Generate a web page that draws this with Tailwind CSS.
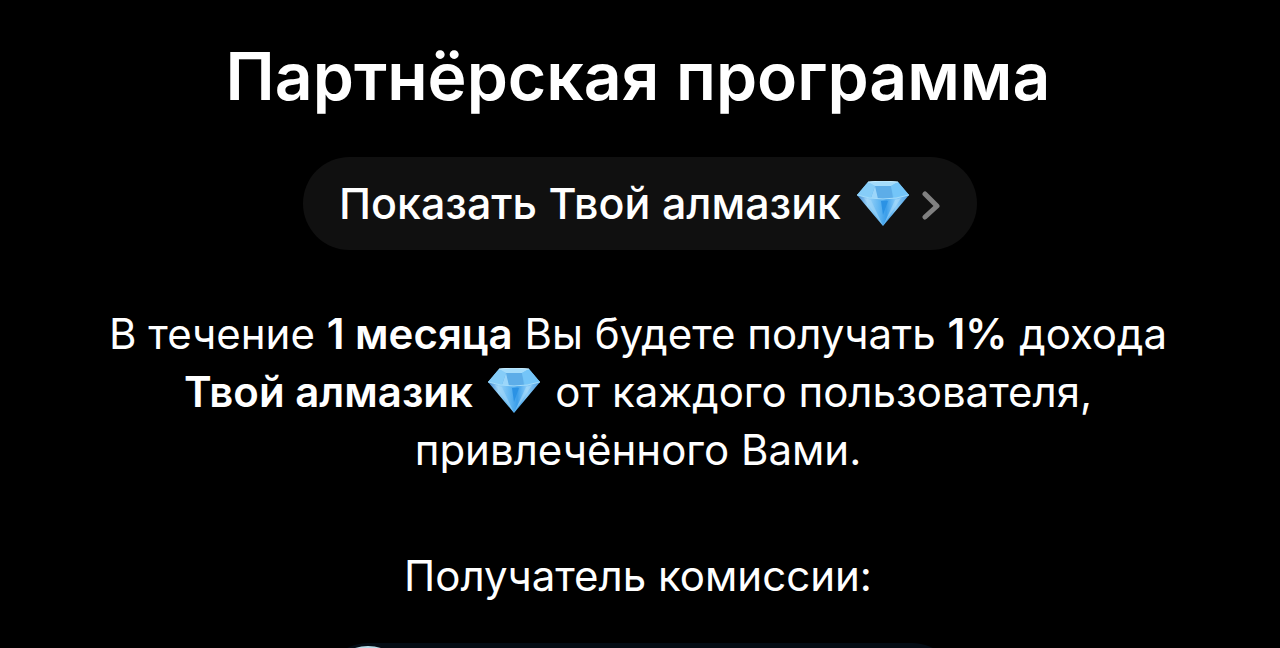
<!DOCTYPE html>
<html lang="ru">
<head>
  <meta charset="UTF-8" />
  <meta name="viewport" content="width=device-width, initial-scale=1.0" />
  <title>Партнёрская программа</title>
  <script src="https://cdn.jsdelivr.net/npm/@tailwindcss/browser@4"></script>
</head>
<body class="bg-black text-white font-['Inter',sans-serif]">
  <!-- Алмаз -->
  <svg class="absolute size-0" aria-hidden="true">
    <defs>
      <linearGradient id="pavilion" x1="0" y1="0" x2="1" y2="0">
        <stop offset="0" stop-color="#3f86cf" />
        <stop offset=".2" stop-color="#9ad3f8" />
        <stop offset=".42" stop-color="#62b7f2" />
        <stop offset=".56" stop-color="#3b9eea" />
        <stop offset=".75" stop-color="#8accf8" />
        <stop offset="1" stop-color="#4d9ee2" />
      </linearGradient>
    </defs>
    <symbol id="diamond" viewBox="0 0 52 45">
      <path d="M0 14Q26 21 52 14L26 45Z" fill="url(#pavilion)" />
      <path d="M11 1Q26-1 41 1L52 14Q26 22 0 14Z" fill="#6fc0f5" />
      <path d="M11 1 18 5 14 17 0 14Z" fill="#86cdf8" />
      <path d="M11 1Q26-1 41 1L34 5H18Z" fill="#a4dcfb" />
      <path d="M18 5H34L36 17Q25 19 14 17Z" fill="#5dade8" />
      <path d="M18 5 21 18 14 17Z" fill="#9bd6fa" />
      <path d="M41 1 52 14 37 17 34 5Z" fill="#74c5f8" />
      <path d="M24 20H31L26 34Z" fill="#2b92e4" />
      <path d="M7 17 14 19 26 45Z" fill="#a6d9f9" fill-opacity=".5" />
      <path d="M38 19 44 17 26 45Z" fill="#b0dffb" fill-opacity=".5" />
      <path d="M0 14Q26 22 52 14" fill="none" stroke="#a5ddfb" stroke-width="1" />
      <path d="M11 1Q26-1 41 1" fill="none" stroke="#c5eafd" stroke-width="1" />
    </symbol>
  </svg>

  <main class="h-screen overflow-hidden flex flex-col items-center px-20 pt-9 text-center">
    <h1 class="pr-1 text-[66px] leading-20 font-semibold">Партнёрская программа</h1>

    <button type="button" class="mt-[41px] h-[93px] shrink-0 px-9 rounded-full bg-[#101010] flex items-center text-[43px] font-medium">
      Показать Твой алмазик
      <svg class="ml-4 w-[52px] h-[45px]"><use href="#diamond" /></svg>
      <svg class="ml-3 w-5 h-8" viewBox="0 0 20 32" fill="none" stroke="#808080" stroke-width="5" stroke-linecap="round" stroke-linejoin="round">
        <path d="M4 6 16 18 4 29" />
      </svg>
    </button>

    <p class="mt-[55px] pr-1 text-[42px] leading-[58px]">
      В течение <b class="font-semibold">1 месяца</b> Вы будете получать <b class="font-semibold">1%</b> дохода<br />
      <b class="font-semibold">Твой алмазик <svg class="inline align-[-6px] w-[52px] h-[45px] mx-1"><use href="#diamond" /></svg></b> от каждого пользователя,<br />
      привлечённого Вами.
    </p>

    <p class="mt-17 pr-1 text-[42px] leading-[58px]">Получатель комиссии:</p>

    <!-- Получатель -->
    <div class="mt-[38px] w-[636px] h-[92px] shrink-0 rounded-full bg-[#040c14] flex items-start p-[3px]">
      <div class="size-[86px] rounded-full bg-[#b9dce8]"></div>
    </div>
  </main>
</body>
</html>
